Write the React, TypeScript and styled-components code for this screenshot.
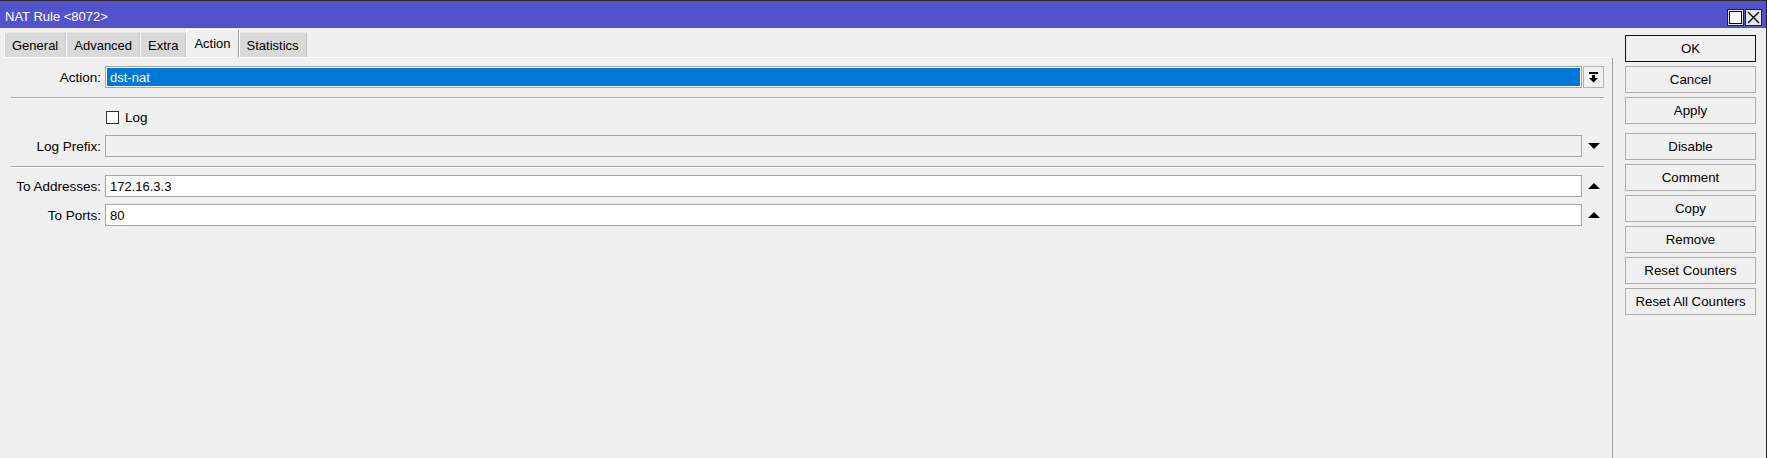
import React from "react"
import styled, { createGlobalStyle } from "styled-components"

const GlobalStyle = createGlobalStyle`
  html, body {
    margin: 0;
    padding: 0;
  }
  body {
    background: #f0f0f0;
    font-family: "Liberation Sans", Arial, sans-serif;
    font-size: 13px;
    color: #000;
  }
`

const Window = styled.div`
  width: 1767px;
  height: 458px;
  box-sizing: border-box;
  border-top: 1px solid #2b2b2b;
  border-right: 1px solid #1e1e1e;
  background: #f0f0f0;
  display: flex;
  flex-direction: column;
  overflow: hidden;
`

const TitleBar = styled.div`
  height: 27px;
  flex-shrink: 0;
  box-sizing: border-box;
  padding: 3px 4px 0 5px;
  background: #5252cd;
  color: #fff;
  display: flex;
  align-items: center;
  justify-content: space-between;
`

const TitleText = styled.span`
  line-height: 15px;
`

const TitleButtons = styled.div`
  display: flex;
  gap: 1px;
  align-self: flex-start;
  margin-top: 5px;
`

const TitleBox = styled.div`
  width: 17px;
  height: 17px;
  box-sizing: border-box;
  border: 1px solid #222;
  background: #e6e6e6;
  display: flex;
  align-items: center;
  justify-content: center;
`

const Body = styled.div`
  flex: 1;
  display: flex;
`

const Main = styled.div`
  width: 1613px;
  box-sizing: border-box;
  padding-left: 4px;
  display: flex;
  flex-direction: column;
`

const TabBar = styled.div`
  height: 28px;
  margin-top: 1px;
  display: flex;
  align-items: flex-end;
`

const Tab = styled.div<{ $active?: boolean }>`
  height: ${(p) => (p.$active ? "28px" : "25px")};
  box-sizing: border-box;
  padding: 0 7px;
  display: flex;
  align-items: center;
  background: ${(p) => (p.$active ? "#f0f0f0" : "#d9d9d9")};
  border-top: 1px solid ${(p) => (p.$active ? "#ffffff" : "#e8e8e8")};
  border-left: 1px solid #ffffff;
  border-right: 1px solid ${(p) => (p.$active ? "#a0a0a0" : "#c4c4c4")};
`

const Panel = styled.div`
  flex: 1;
  box-sizing: border-box;
  padding: 8px 8px 0 0;
  border-top: 1px solid #ffffff;
  border-right: 1px solid #a0a0a0;
  display: flex;
  flex-direction: column;
`

const Row = styled.div<{ $top?: number }>`
  height: 22px;
  margin-top: ${(p) => p.$top ?? 0}px;
  display: grid;
  grid-template-columns: 97px 1fr 22px;
  column-gap: 4px;
  align-items: center;
`

const Label = styled.span`
  text-align: right;
  white-space: nowrap;
  font-size: 13.5px;
`

const Field = styled.div<{ $disabled?: boolean }>`
  height: 22px;
  box-sizing: border-box;
  border: 1px solid #a5a5a5;
  background: ${(p) => (p.$disabled ? "#f0f0f0" : "#ffffff")};
  padding-left: 4px;
  display: flex;
  align-items: center;
  margin-right: -4px;
`

const SelectedField = styled.div`
  height: 22px;
  box-sizing: border-box;
  border: 1px solid #a5a5a5;
  background: #ffffff;
  padding: 1px;
  display: flex;
  margin-right: -4px;
`

const Selected = styled.div`
  flex: 1;
  background: #0078d7;
  color: #fff;
  padding-left: 3px;
  display: flex;
  align-items: center;
`

const ArrowCell = styled.div`
  display: flex;
  align-items: center;
  justify-content: center;
  height: 22px;
  margin-left: 2px;
`

const DropButton = styled.div`
  width: 21px;
  height: 22px;
  margin-left: 1px;
  box-sizing: border-box;
  border: 1px solid #b4b4b4;
  background: #f0f0f0;
  display: flex;
  align-items: center;
  justify-content: center;
`

const Separator = styled.div<{ $top: number }>`
  margin: ${(p) => p.$top}px 0 0 7px;
  border-top: 1px solid #a8a8a8;
  border-bottom: 1px solid #ffffff;
`

const CheckLine = styled.label`
  display: flex;
  align-items: center;
  gap: 6px;
  padding-left: 1px;
  font-size: 13.5px;
`

const CheckBox = styled.span`
  width: 13px;
  height: 13px;
  box-sizing: border-box;
  border: 1px solid #333;
  background: #fff;
`

const Side = styled.div`
  flex: 1;
  box-sizing: border-box;
  padding: 7px 0 0 12px;
  display: flex;
  flex-direction: column;
  gap: 9px;
`

const ButtonGroup = styled.div`
  display: flex;
  flex-direction: column;
  gap: 4px;
`

const Button = styled.button<{ $primary?: boolean }>`
  width: 131px;
  height: 27px;
  box-sizing: border-box;
  border: 1px solid ${(p) => (p.$primary ? "#111" : "#adadad")};
  background: #f0f0f0;
  font-family: "Liberation Sans", Arial, sans-serif;
  font-size: 13.3px;
  color: #000;
  padding: 0;
`

const DropIcon = () => (
  <svg width="9" height="11" viewBox="0 0 9 11">
    <rect x="0" y="0" width="9" height="2" fill="#000" />
    <rect x="3" y="3" width="3" height="3" fill="#000" />
    <polygon points="0,6 9,6 4.5,10.5" fill="#000" />
  </svg>
)

const Triangle = ({ up }: { up?: boolean }) => (
  <svg width="12" height="6" viewBox="0 0 12 6">
    <polygon points={up ? "0,6 12,6 6,0" : "0,0 12,0 6,6"} fill="#000" />
  </svg>
)

const tabs = ["General", "Advanced", "Extra", "Action", "Statistics"]

export default function App() {
  return (
    <>
      <GlobalStyle />
      <Window>
        <TitleBar>
          <TitleText>NAT Rule &lt;8072&gt;</TitleText>
          <TitleButtons>
            <TitleBox>
              <svg width="13" height="13" viewBox="0 0 13 13">
                <rect x="0.5" y="0.5" width="12" height="12" fill="#fff" stroke="#000" />
              </svg>
            </TitleBox>
            <TitleBox>
              <svg width="13" height="13" viewBox="0 0 13 13">
                <path d="M1 1 L12 12 M12 1 L1 12" stroke="#000" strokeWidth="1.4" />
              </svg>
            </TitleBox>
          </TitleButtons>
        </TitleBar>
        <Body>
          <Main>
            <TabBar>
              {tabs.map((t) => (
                <Tab key={t} $active={t === "Action"}>
                  {t}
                </Tab>
              ))}
            </TabBar>
            <Panel>
              <Row>
                <Label>Action:</Label>
                <SelectedField>
                  <Selected>dst-nat</Selected>
                </SelectedField>
                <DropButton>
                  <DropIcon />
                </DropButton>
              </Row>
              <Separator $top={9} />
              <Row $top={7}>
                <span />
                <CheckLine>
                  <CheckBox />
                  Log
                </CheckLine>
              </Row>
              <Row $top={7}>
                <Label>Log Prefix:</Label>
                <Field $disabled />
                <ArrowCell>
                  <Triangle />
                </ArrowCell>
              </Row>
              <Separator $top={9} />
              <Row $top={7}>
                <Label>To Addresses:</Label>
                <Field>172.16.3.3</Field>
                <ArrowCell>
                  <Triangle up />
                </ArrowCell>
              </Row>
              <Row $top={7}>
                <Label>To Ports:</Label>
                <Field>80</Field>
                <ArrowCell>
                  <Triangle up />
                </ArrowCell>
              </Row>
            </Panel>
          </Main>
          <Side>
            <ButtonGroup>
              <Button $primary>OK</Button>
              <Button>Cancel</Button>
              <Button>Apply</Button>
            </ButtonGroup>
            <ButtonGroup>
              <Button>Disable</Button>
              <Button>Comment</Button>
              <Button>Copy</Button>
              <Button>Remove</Button>
              <Button>Reset Counters</Button>
              <Button>Reset All Counters</Button>
            </ButtonGroup>
          </Side>
        </Body>
      </Window>
    </>
  )
}
